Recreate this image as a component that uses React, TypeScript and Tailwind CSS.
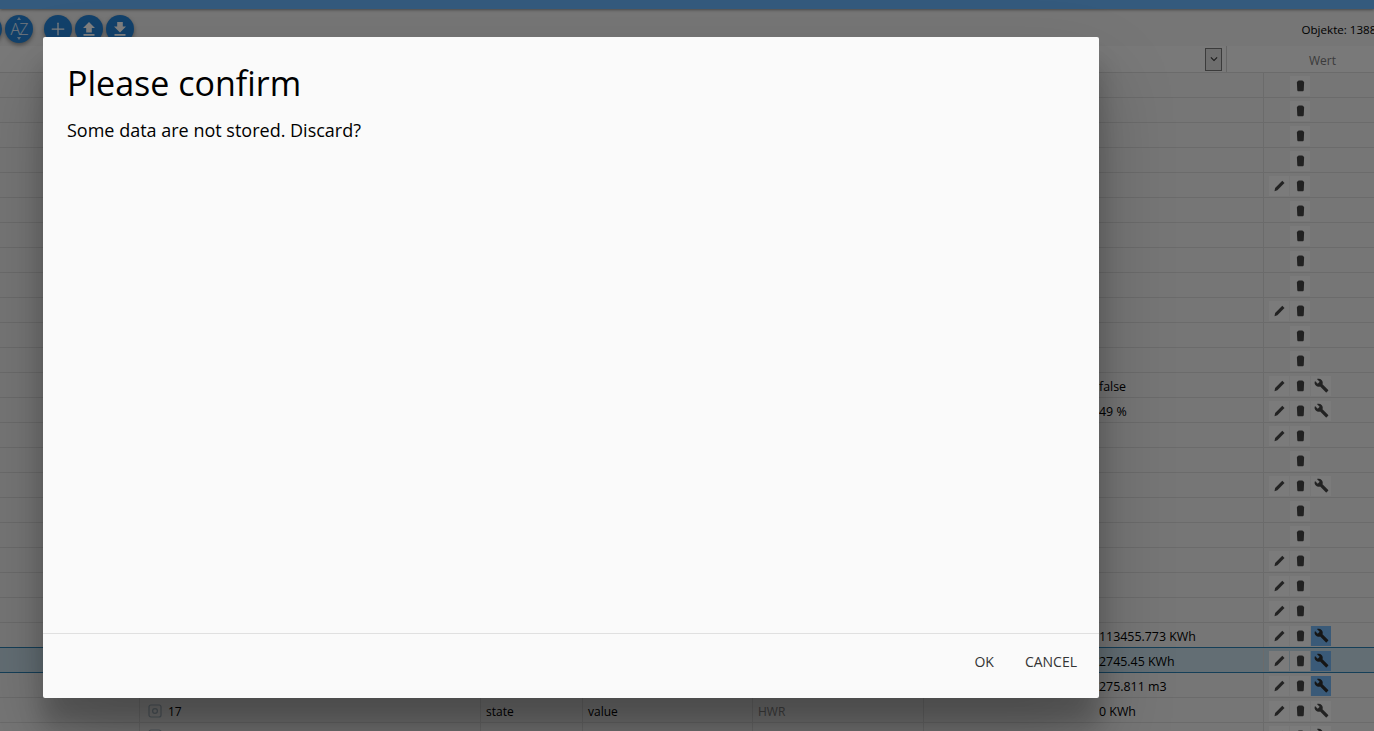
import { MdBuild, MdKeyboardArrowDown } from "react-icons/md";
import { Plus } from "lucide-react";

type Row = { p?: boolean; w?: "blue" | "plain"; val?: string; hi?: boolean; id?: string };

const rows: Row[] = [
  {}, {}, {}, {},
  { p: true }, {}, {}, {}, {},
  { p: true }, {}, {},
  { p: true, w: "plain", val: "false" },
  { p: true, w: "plain", val: "49 %" },
  { p: true }, {},
  { p: true, w: "plain" }, {}, {},
  { p: true }, { p: true }, { p: true },
  { p: true, w: "blue", val: "113455.773 KWh" },
  { p: true, w: "blue", val: "2745.45 KWh", hi: true },
  { p: true, w: "blue", val: "275.811 m3" },
  { p: true, w: "plain", val: "0 KWh", id: "17" },
  { p: true, w: "plain", id: " " },
];

function Pencil() {
  return (
    <svg width="15" height="15" viewBox="0 0 24 24" fill="currentColor">
      <path d="M4 21l1-5L16.5 4.5 20 8 8.5 19.5z" />
    </svg>
  );
}

function Trash() {
  return (
    <svg width="15" height="15" viewBox="0 0 24 24" fill="currentColor">
      <path d="M9 4h6l2.8 2.5-.6 12.5c0 1.2-.9 2-2 2H8.800c-1.100 0-2-.8-2-2L6.200 6.500z" />
    </svg>
  );
}

function UpIcon() {
  return (
    <svg width="28" height="28" viewBox="0 0 28 28" fill="currentColor">
      <path d="M14 7l6 6h-3.200v4.500h-5.600V13H8z" />
      <rect x="8.500" y="19" width="11" height="1.800" />
    </svg>
  );
}

function DownIcon() {
  return (
    <svg width="28" height="28" viewBox="0 0 28 28" fill="currentColor">
      <path d="M14 17.500l-6-6h3.200V7h5.600v4.500H20z" />
      <rect x="8.500" y="19" width="11" height="1.800" />
    </svg>
  );
}

function Btn({ children, blue }: { children?: React.ReactNode; blue?: boolean }) {
  return (
    <div className={`flex h-5 w-5 items-center justify-center ${children ? (blue ? "bg-[#74b4f0] text-[#2c2c2c]" : "bg-[#f6f6f6] text-[#444]") : ""}`}>
      {children}
    </div>
  );
}

function TableRow({ r }: { r: Row }) {
  return (
    <div className={`flex h-[25px] shrink-0 items-center border-b text-[12px] text-black ${r.hi ? "border-[#2a7fb0] bg-[#c6dde9] shadow-[0_-1px_0_#2a7fb0]" : "border-[#d6d6d6]"}`}>
      <div className="h-full w-[139px] shrink-0" />
      <div className="flex h-full w-[341px] shrink-0 items-center gap-[6px] border-l border-[#d6d6d6] pl-2 pt-[2px]">
        {r.id ? (
          <>
            <svg width="14" height="14" viewBox="0 0 14 14" fill="none" stroke="#a3b3bf" strokeWidth="1.200">
              <rect x="1" y="1" width="12" height="12" rx="2" />
              <circle cx="7" cy="7" r="2.400" />
            </svg>
            <span className="mt-[2px]">{r.id}</span>
          </>
        ) : null}
      </div>
      <div className="flex h-full w-[102px] shrink-0 items-center border-l border-[#d6d6d6] pl-[5px] pt-[3px]">{r.id === "17" ? "state" : ""}</div>
      <div className="flex h-full w-[170px] shrink-0 items-center border-l border-[#d6d6d6] pl-[5px] pt-[3px]">{r.id === "17" ? "value" : ""}</div>
      <div className="flex h-full w-[171px] shrink-0 items-center border-l border-[#d6d6d6] pl-[5px] pt-[3px] text-[#888]">{r.id === "17" ? "HWR" : ""}</div>
      <div className="h-full w-[176px] shrink-0 border-l border-[#d6d6d6]" />
      <div className="flex h-full w-[164px] shrink-0 items-center whitespace-nowrap pt-[5px] text-[12.4px]">{r.val}</div>
      <div className="flex h-full flex-1 items-center gap-px border-l border-[#d6d6d6] pl-[5px] pt-px">
        <Btn>{r.p ? <Pencil /> : null}</Btn>
        <Btn><Trash /></Btn>
        <Btn blue={r.w === "blue"}>{r.w ? <MdBuild className="text-[15px]" /> : null}</Btn>
      </div>
    </div>
  );
}

function Round({ children }: { children?: React.ReactNode }) {
  return (
    <div className="relative flex h-7 w-7 shrink-0 items-center justify-center rounded-full bg-[#2583d6] text-white shadow-[0_2px_4px_rgba(0,0,0,0.4)]">
      {children}
    </div>
  );
}

export default function App() {
  return (
    <div className="relative h-[731px] w-[1374px] overflow-hidden bg-[#ececec] font-['Open_Sans','Noto_Sans',sans-serif]">
      <div className="flex h-full flex-col">
        <div className="h-[9px] shrink-0 bg-[#69b4fb] shadow-[0_1px_3px_rgba(0,0,0,0.4)]" />
        <div className="flex h-[37px] shrink-0 items-center pb-[5px] pt-[7px]">
          <div className="ml-[-26px] flex items-center gap-[3px]">
            <Round />
            <Round>
              <span className="text-[16px] font-light leading-none tracking-[-1px] text-white/90">AZ</span>
              <span className="absolute left-[12px] top-[2px] h-0 w-0 border-x-[2px] border-b-[3px] border-x-transparent border-b-white/70" />
              <span className="absolute bottom-[3px] left-[12px] h-0 w-0 border-x-[2px] border-t-[3px] border-x-transparent border-t-white/70" />
            </Round>
          </div>
          <div className="ml-[11px] flex items-center gap-[3px]">
            <Round><Plus size={20} strokeWidth={1.5} /></Round>
            <Round><UpIcon /></Round>
            <Round><DownIcon /></Round>
          </div>
          <div className="ml-auto mr-[-9px] whitespace-nowrap pt-[2px] text-[11.6px] text-black">Objekte: 13884</div>
        </div>
        <div className="flex h-[27px] shrink-0 items-center border-b border-[#d6d6d6] bg-[#f2f2f2]">
          <div className="w-[1205px] shrink-0" />
          <div className="flex h-[23px] w-[17px] shrink-0 items-center justify-center border border-[#777] bg-[#ddd] text-[14px] text-[#333]">
            <MdKeyboardArrowDown />
          </div>
          <div className="ml-[4px] flex h-full w-[192px] shrink-0 items-center justify-center border-l border-[#ccc] pt-[4px] text-[12px] text-[#777]">Wert</div>
        </div>
        {rows.map((r, i) => <TableRow key={i} r={r} />)}
      </div>
      <div className="absolute inset-0 bg-black/50" />
      <div className="absolute left-[43px] top-[37px] flex h-[661px] w-[1056px] flex-col rounded-[2px] bg-[#fafafa] text-black shadow-[0_27px_24px_rgba(0,0,0,0.2),0_40px_77px_rgba(0,0,0,0.22)]">
        <div className="flex-1 px-6 pt-[23px]">
          <h4 className="text-[34px] leading-[46px]">Please confirm</h4>
          <p className="mt-[12px] text-[18px] leading-[24px]">Some data are not stored. Discard?</p>
        </div>
        <div className="flex h-[65px] shrink-0 items-center justify-end gap-[31px] border-t border-[#e0e0e0] pb-[10px] pr-[22px] text-[14px] text-[#343434]">
          <span>OK</span>
          <span>CANCEL</span>
        </div>
      </div>
    </div>
  );
}
